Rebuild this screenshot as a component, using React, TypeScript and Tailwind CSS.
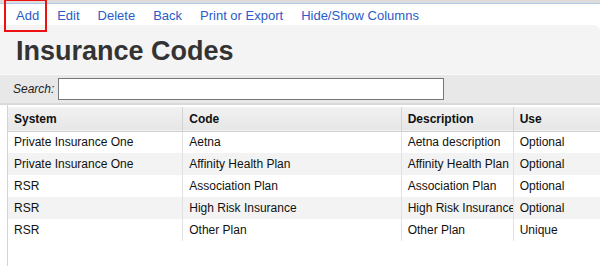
import React from "react";

const rows = [
  { system: "Private Insurance One", code: "Aetna", description: "Aetna description", use: "Optional" },
  { system: "Private Insurance One", code: "Affinity Health Plan", description: "Affinity Health Plan", use: "Optional" },
  { system: "RSR", code: "Association Plan", description: "Association Plan", use: "Optional" },
  { system: "RSR", code: "High Risk Insurance", description: "High Risk Insurance", use: "Optional" },
  { system: "RSR", code: "Other Plan", description: "Other Plan", use: "Unique" },
];

const links = ["Add", "Edit", "Delete", "Back", "Print or Export", "Hide/Show Columns"];

export default function App(): React.JSX.Element {
  return (
    <div className="w-[600px] h-[266px] overflow-hidden bg-white font-['Liberation_Sans',Arial,sans-serif] text-[#111]">
      <div className="h-[3px] bg-[#dcdcdc]" />
      <div className="h-px bg-[#b4cbe8]" />

      {/* action links */}
      <nav className="relative flex h-[21px] items-center gap-[18px] pl-4 pt-[3px] text-[13px] text-[#2a5bc7]">
        {links.map((l) => (
          <span key={l} className="relative">
            {l}
            {l === "Add" && (
              <span className="absolute -left-[12px] -right-[8px] -top-[7px] -bottom-[6px] border-2 border-[#ee1111]" />
            )}
          </span>
        ))}
      </nav>

      <div className="bg-[#f4f4f4] rounded-tr-md">
        <h1 className="pl-4 pt-[12px] pb-[8px] text-[27px] font-bold leading-[29px] text-[#333]">Insurance Codes</h1>

        <div className="flex h-[31px] items-center gap-1 border-t border-[#fafafa] bg-[#e8e8e8] pl-[13px] border-b-2 border-b-[#d9d9d9]">
          <span className="text-[12px] italic text-[#222]">Search:</span>
          <input className="h-[22px] w-[386px] border border-[#767676] bg-white" />
        </div>
      </div>

      {/* table */}
      <div className="ml-[7px] h-[200px] border-l border-[#d4d4d4] pt-0.5">
        <table className="border-collapse text-[12px]">
          <colgroup>
            <col className="w-[175px]" />
            <col className="w-[219px]" />
            <col className="w-[112px]" />
            <col className="w-[87px]" />
          </colgroup>
          <thead>
            <tr className="h-[24px] bg-gradient-to-b from-[#f2f2f2] to-[#e6e6e6] border-b border-[#d0d0d0] font-bold">
              <th className="pl-[6px] text-left">System</th>
              <th className="border-l border-[#d4d4d4] pl-[6px] text-left">Code</th>
              <th className="border-l border-[#d4d4d4] pl-[6px] text-left">Description</th>
              <th className="border-l border-[#d4d4d4] pl-[6px] text-left">Use</th>
            </tr>
          </thead>
          <tbody>
            {rows.map((r, i) => (
              <tr key={i} className={i % 2 === 1 ? "h-[22px] bg-[#f3f3f3]" : "h-[22px] bg-white"}>
                <td className="pl-[6px] whitespace-nowrap">{r.system}</td>
                <td className="border-l border-[#e2e2e2] pl-[6px] whitespace-nowrap">{r.code}</td>
                <td className="max-w-[112px] overflow-hidden border-l border-[#e2e2e2] pl-[6px] whitespace-nowrap">{r.description}</td>
                <td className="border-l border-[#e2e2e2] pl-[6px] whitespace-nowrap">{r.use}</td>
              </tr>
            ))}
          </tbody>
        </table>
      </div>
    </div>
  );
}
